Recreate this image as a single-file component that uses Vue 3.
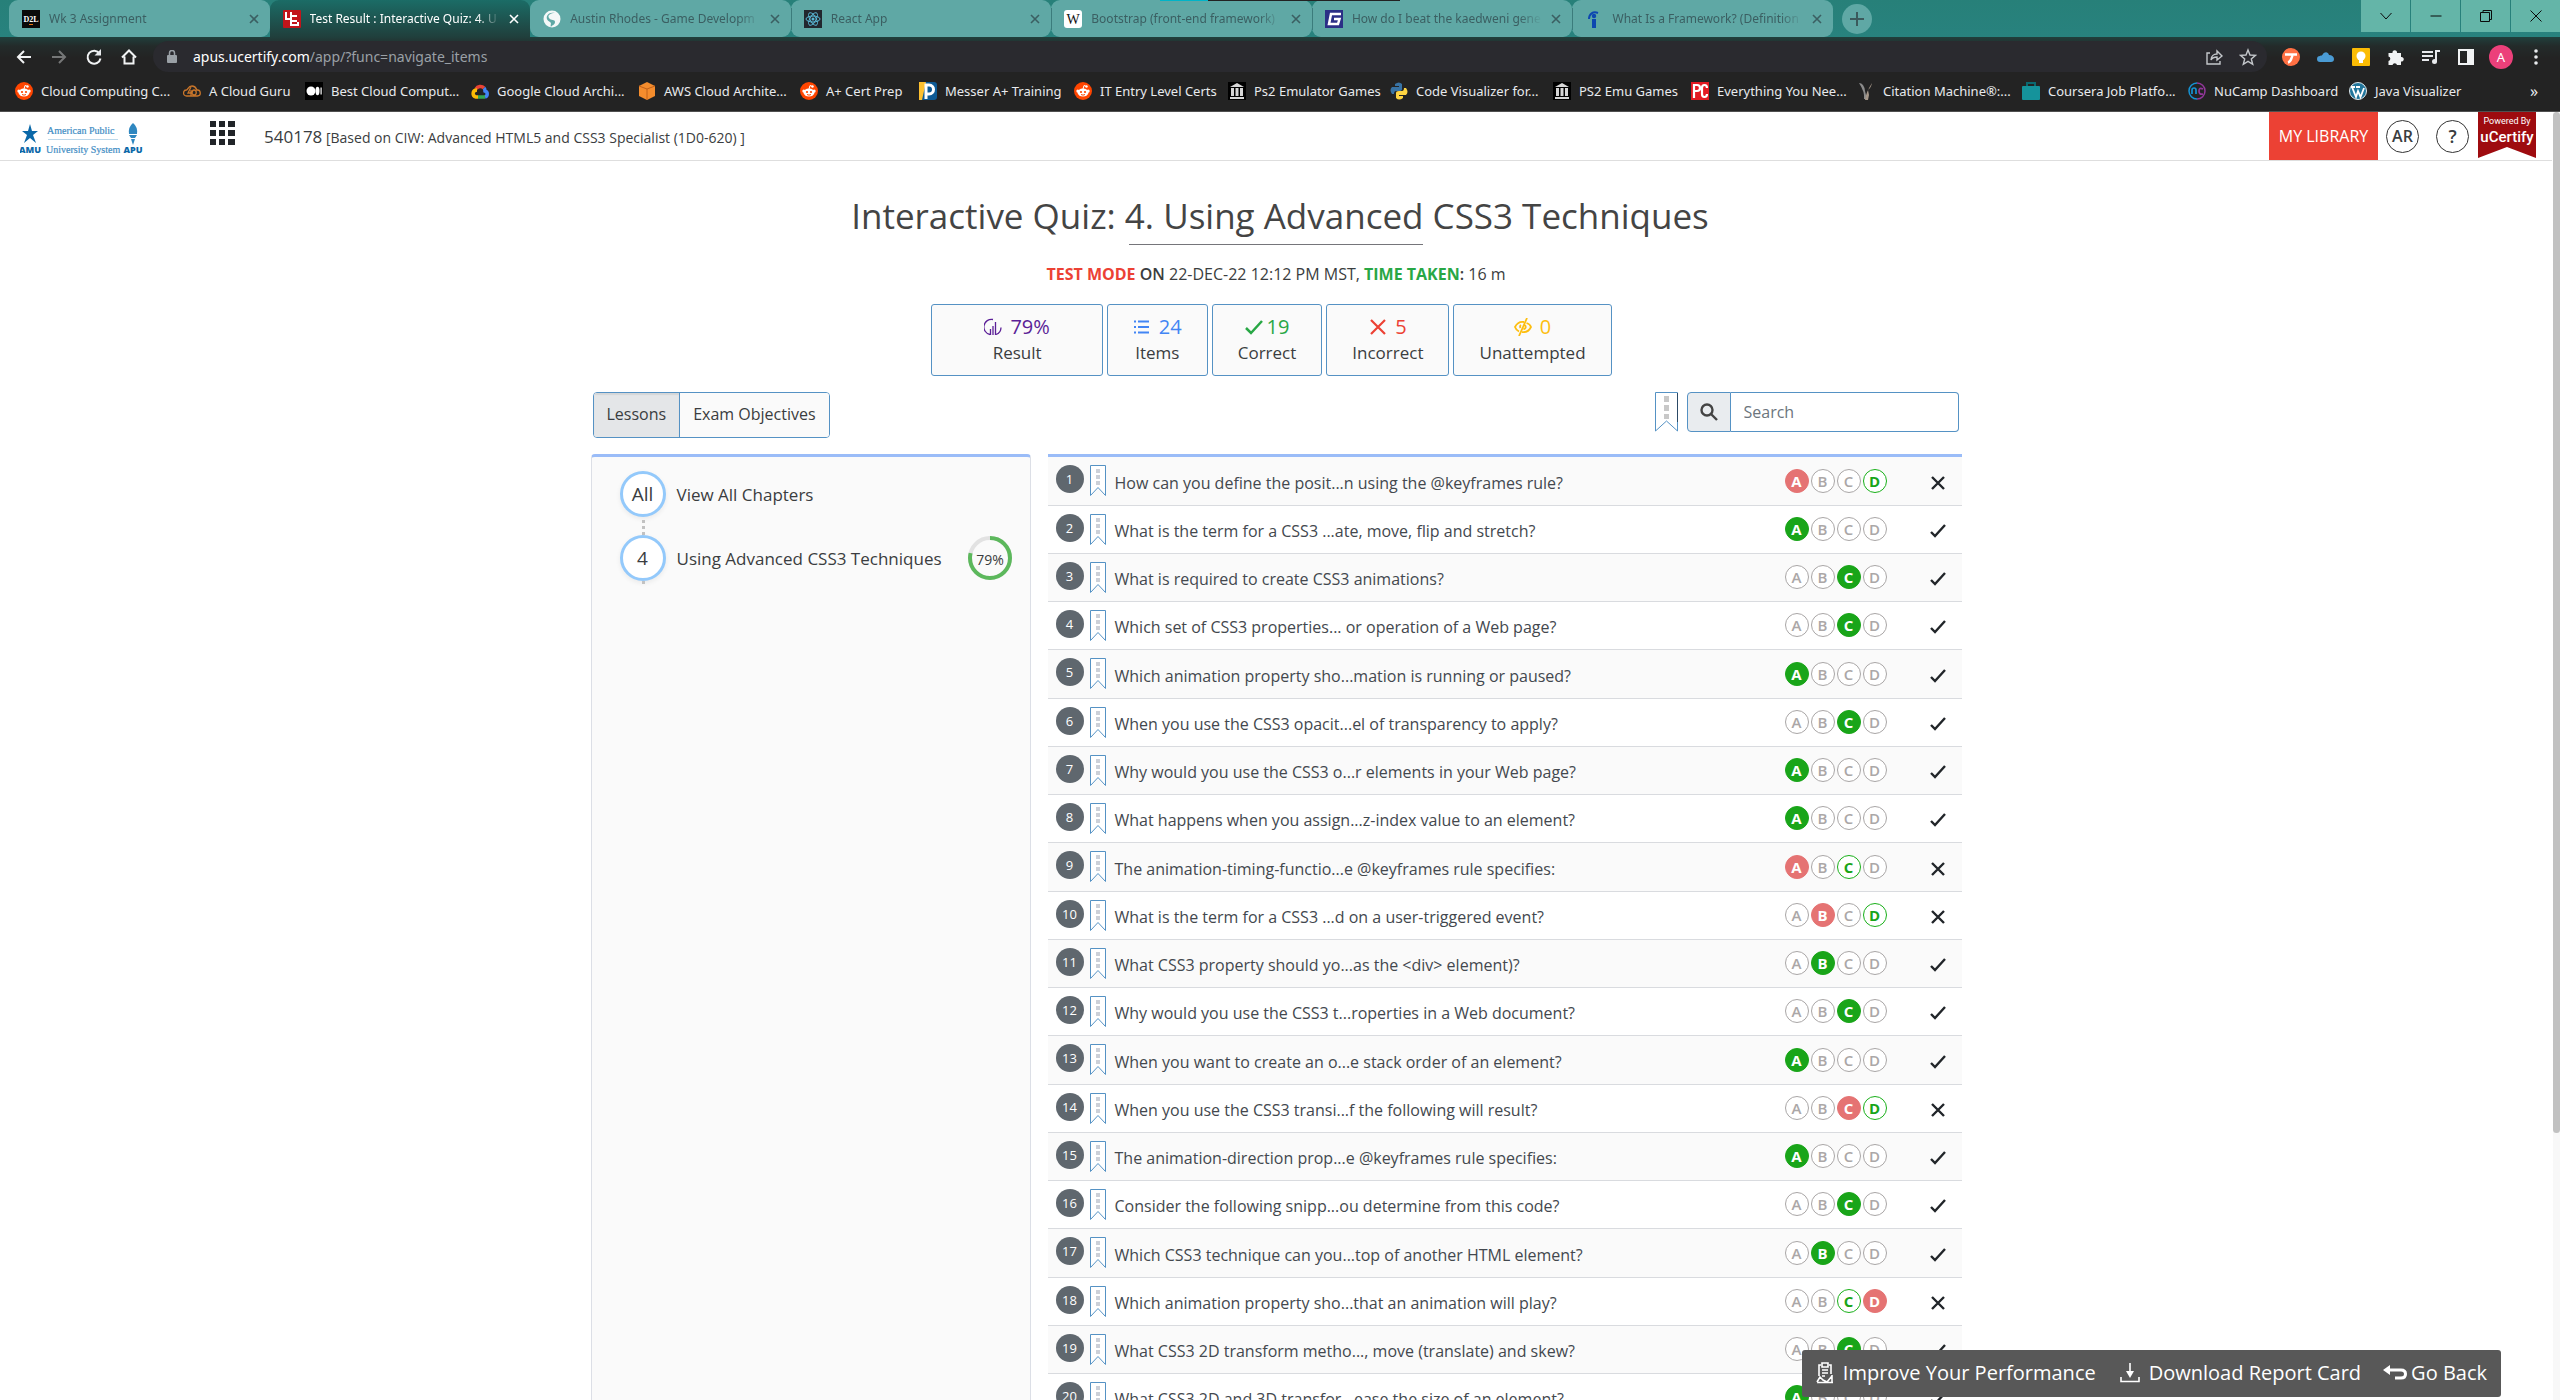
<script setup>
const tabs = [
  { title: 'Wk 3 Assignment', icon: 'd2l' },
  { title: 'Test Result : Interactive Quiz: 4. U', icon: 'uc', active: true },
  { title: 'Austin Rhodes - Game Developm', icon: 'globe' },
  { title: 'React App', icon: 'react' },
  { title: 'Bootstrap (front-end framework)', icon: 'wiki' },
  { title: 'How do I beat the kaedweni gene', icon: 'gfaq' },
  { title: 'What Is a Framework? (Definition', icon: 'indeed' },
]

const bookmarks = [
  { title: 'Cloud Computing C...', icon: 'reddit' },
  { title: 'A Cloud Guru', icon: 'guru' },
  { title: 'Best Cloud Comput...', icon: 'medium' },
  { title: 'Google Cloud Archi...', icon: 'gcloud' },
  { title: 'AWS Cloud Archite...', icon: 'aws' },
  { title: 'A+ Cert Prep', icon: 'reddit' },
  { title: 'Messer A+ Training', icon: 'messer' },
  { title: 'IT Entry Level Certs', icon: 'reddit' },
  { title: 'Ps2 Emulator Games', icon: 'archive' },
  { title: 'Code Visualizer for...', icon: 'python' },
  { title: 'PS2 Emu Games', icon: 'archive' },
  { title: 'Everything You Nee...', icon: 'pc' },
  { title: 'Citation Machine®:...', icon: 'citation' },
  { title: 'Coursera Job Platfo...', icon: 'coursera' },
  { title: 'NuCamp Dashboard', icon: 'nucamp' },
  { title: 'Java Visualizer', icon: 'wordpress' },
]

const stats = [
  { key: 'result', value: '79%', label: 'Result' },
  { key: 'items', value: '24', label: 'Items' },
  { key: 'correct', value: '19', label: 'Correct' },
  { key: 'incorrect', value: '5', label: 'Incorrect' },
  { key: 'unattempted', value: '0', label: 'Unattempted' },
]

// picked: the answer given; key: the right answer
const questions = [
  { text: 'How can you define the posit...n using the @keyframes rule?', picked: 'A', key: 'D' },
  { text: 'What is the term for a CSS3 ...ate, move, flip and stretch?', picked: 'A', key: 'A' },
  { text: 'What is required to create CSS3 animations?', picked: 'C', key: 'C' },
  { text: 'Which set of CSS3 properties... or operation of a Web page?', picked: 'C', key: 'C' },
  { text: 'Which animation property sho...mation is running or paused?', picked: 'A', key: 'A' },
  { text: 'When you use the CSS3 opacit...el of transparency to apply?', picked: 'C', key: 'C' },
  { text: 'Why would you use the CSS3 o...r elements in your Web page?', picked: 'A', key: 'A' },
  { text: 'What happens when you assign...z-index value to an element?', picked: 'A', key: 'A' },
  { text: 'The animation-timing-functio...e @keyframes rule specifies:', picked: 'A', key: 'C' },
  { text: 'What is the term for a CSS3 ...d on a user-triggered event?', picked: 'B', key: 'D' },
  { text: 'What CSS3 property should yo...as the <div> element)?', picked: 'B', key: 'B' },
  { text: 'Why would you use the CSS3 t...roperties in a Web document?', picked: 'C', key: 'C' },
  { text: 'When you want to create an o...e stack order of an element?', picked: 'A', key: 'A' },
  { text: 'When you use the CSS3 transi...f the following will result?', picked: 'C', key: 'D' },
  { text: 'The animation-direction prop...e @keyframes rule specifies:', picked: 'A', key: 'A' },
  { text: 'Consider the following snipp...ou determine from this code?', picked: 'C', key: 'C' },
  { text: 'Which CSS3 technique can you...top of another HTML element?', picked: 'B', key: 'B' },
  { text: 'Which animation property sho...that an animation will play?', picked: 'D', key: 'C' },
  { text: 'What CSS3 2D transform metho..., move (translate) and skew?', picked: 'C', key: 'C' },
  { text: 'What CSS3 2D and 3D transfor...ease the size of an element?', picked: 'A', key: 'A' },
]

function choiceClass(q, letter) {
  if (q.picked === letter) return q.key === letter ? 'right' : 'wrong'
  return q.key === letter ? 'answer' : ''
}
</script>

<template>
  <div class="window">
    <header class="chrome">
      <div class="titlebar">
        <i class="strip"></i>
        <nav class="tabs" aria-label="Tabs">
          <div v-for="t in tabs" :key="t.title" class="tab" :class="{ active: t.active }">
            <svg class="fav" viewBox="0 0 18 18" aria-hidden="true">
              <template v-if="t.icon === 'd2l'">
                <rect width="18" height="18" fill="#0a0a0a" /><text x="9" y="12" text-anchor="middle" font-size="8" font-weight="700" fill="#fff" font-family="Liberation Serif, serif">D2L</text><path d="M7 14.500h4" stroke="#e87511" stroke-width="1" />
              </template>
              <template v-else-if="t.icon === 'uc'">
                <rect width="18" height="18" rx="1" fill="#c2151b" /><path d="M3 2v7h6M8 2v14M8 6h6M14 11H9M8 15h7v-3" stroke="#fff" stroke-width="2" fill="none" />
              </template>
              <template v-else-if="t.icon === 'globe'">
                <circle cx="9" cy="9" r="8.500" fill="#f4f8f8" /><path d="M12 3C8 3 4 5 6 8s6 1 6 4-3 3-4 5c-1-2 1-4-1-5S3 9 4 6s5-4 8-3z" fill="#5fa8a5" />
              </template>
              <template v-else-if="t.icon === 'react'">
                <rect width="18" height="18" fill="#22272e" /><g fill="none" stroke="#5ab7d4"><ellipse cx="9" cy="9" rx="7" ry="3" /><ellipse cx="9" cy="9" rx="7" ry="3" transform="rotate(60 9 9)" /><ellipse cx="9" cy="9" rx="7" ry="3" transform="rotate(120 9 9)" /></g><circle cx="9" cy="9" r="1.500" fill="#5ab7d4" />
              </template>
              <template v-else-if="t.icon === 'wiki'">
                <rect width="18" height="18" rx="3" fill="#fff" /><text x="9" y="14" text-anchor="middle" font-size="14" fill="#111" font-family="Liberation Serif, serif">W</text>
              </template>
              <template v-else-if="t.icon === 'gfaq'">
                <rect width="18" height="18" fill="#2b2f86" /><path d="M16 4H6L4 14h9l1.500-5H9" stroke="#fff" stroke-width="2.500" fill="none" />
              </template>
              <template v-else>
                <path d="M4 9C4 4 8 1 13 3" stroke="#0d47b0" stroke-width="2" fill="none" /><circle cx="9" cy="6" r="2.200" fill="#0d47b0" /><rect x="7" y="9" width="4" height="9" fill="#0d47b0" />
              </template>
            </svg>
            <span class="tab-title">{{ t.title }}</span>
            <button class="tab-close" type="button" aria-label="Close tab">
              <svg width="10" height="10" viewBox="0 0 10 10"><path d="M1 1l8 8M9 1l-8 8" stroke="currentColor" stroke-width="1.600" /></svg>
            </button>
          </div>
        </nav>
        <button class="new-tab" type="button" aria-label="New tab">
          <svg width="14" height="14" viewBox="0 0 14 14"><path d="M7 0v14M0 7h14" stroke="#3b5a5c" stroke-width="2" /></svg>
        </button>
        <div class="controls">
          <button type="button" aria-label="Search tabs"><svg viewBox="0 0 12 12"><path d="M.5 3L6 9l5.500-6" /></svg></button>
          <button type="button" aria-label="Minimize"><svg viewBox="0 0 12 12"><path d="M.5 6h11" /></svg></button>
          <button type="button" aria-label="Restore"><svg viewBox="0 0 12 12"><path d="M.5 2.500h9v9h-9zM3 2.500v-2h8.500v9h-2" /></svg></button>
          <button type="button" aria-label="Close"><svg viewBox="0 0 12 12"><path d="M.5.500l11 11M11.500.500l-11 11" /></svg></button>
        </div>
      </div>

      <div class="toolbar">
        <div class="nav-buttons">
          <button type="button" aria-label="Back"><svg viewBox="0 0 18 18"><path d="M16 9H3M9 3L3 9l6 6" /></svg></button>
          <button type="button" class="dim" aria-label="Forward"><svg viewBox="0 0 18 18"><path d="M2 9h13M9 3l6 6-6 6" /></svg></button>
          <button type="button" aria-label="Reload"><svg viewBox="0 0 18 18"><path d="M14.500 5.500a6.500 6.500 0 1 0 1 5" /><path d="M16 1v6.500H9.500z" fill="#e8eaed" stroke="none" /></svg></button>
          <button type="button" aria-label="Home"><svg viewBox="0 0 18 18"><path d="M2 9.500L9 2.500l7 7M4.500 8.500v7h9v-7" /></svg></button>
        </div>
        <div class="omnibox">
          <svg class="lock" width="10" height="13" viewBox="0 0 10 13"><rect y="5" width="10" height="8" rx="1" fill="#9aa0a6" /><path d="M2.500 5V3a2.500 2.500 0 0 1 5 0v2" fill="none" stroke="#9aa0a6" stroke-width="1.500" /></svg>
          <span class="url"><b>apus.ucertify.com</b>/app/?func=navigate_items</span>
          <svg class="omni-icon" viewBox="0 0 18 18"><path d="M5 5H2v11h13v-3M6 12c0-4 3-6 6-6V3l5 5-5 4V9c-3 0-5 1-6 3z" /></svg>
          <svg class="omni-icon" viewBox="0 0 18 18"><path d="M9 2l2 5 5.500.300-4.200 3.600 1.400 5.400L9 13.300l-4.700 3 1.400-5.400L1.500 7.300 7 7z" /></svg>
        </div>
        <div class="extensions">
          <svg viewBox="0 0 18 18"><circle cx="9" cy="9" r="9" fill="#ff7043" /><path d="M3 6.500h12M11 7.500c-2 1-1 6-5 7" stroke="#fff" stroke-width="2.500" fill="none" /></svg>
          <svg viewBox="0 0 18 18"><path d="M3 14a3 3 0 0 1 0-6c1-1 2 0 3-2s5-3 6 1c3 0 5 2 5 4s-1 3-3 3z" fill="#4a9bd4" /></svg>
          <svg viewBox="0 0 18 18"><rect width="18" height="18" rx="1" fill="#fbbc04" /><circle cx="9" cy="8" r="4.500" fill="#fff" /><rect x="7" y="11" width="4" height="4" fill="#fff" /></svg>
          <svg viewBox="0 0 18 18"><path d="M1.500 5h4a2.300 2.300 0 1 1 4.500 0h4v4a2.300 2.300 0 1 1 0 4.500V17h-4a2.300 2.300 0 0 0-4.500 0h-4v-4a2.300 2.300 0 0 0 0-4.500z" fill="#f1f3f4" /></svg>
          <svg viewBox="0 0 18 18"><path d="M0 4h11M0 8h11M0 12h7M14 14V3h4" stroke="#e8eaed" stroke-width="2" fill="none" /><circle cx="12.500" cy="13.500" r="2.500" fill="#e8eaed" /></svg>
          <svg viewBox="0 0 18 18"><path d="M2 2h14v14H2z" fill="none" stroke="#f1f3f4" stroke-width="2" /><path d="M10 2h6v14h-6z" fill="#f1f3f4" /></svg>
          <button class="avatar" type="button">A</button>
          <svg viewBox="0 0 18 18"><g fill="#e8eaed"><circle cx="9" cy="3" r="1.800" /><circle cx="9" cy="9" r="1.800" /><circle cx="9" cy="15" r="1.800" /></g></svg>
        </div>
      </div>

      <nav class="bookmarks" aria-label="Bookmarks">
        <a v-for="b in bookmarks" :key="b.title" href="#" class="bookmark">
          <svg class="fav" viewBox="0 0 18 18" aria-hidden="true">
            <template v-if="b.icon === 'reddit'">
              <circle cx="9" cy="9" r="9" fill="#ff4500" /><ellipse cx="9" cy="10.500" rx="5.500" ry="4" fill="#fff" /><circle cx="3.800" cy="9" r="1.500" fill="#fff" /><circle cx="14.200" cy="9" r="1.500" fill="#fff" /><circle cx="12.500" cy="4.500" r="1.200" fill="#fff" /><path d="M9 7l1-3.500 2.500 1" stroke="#fff" fill="none" /><circle cx="7" cy="10" r="1.100" fill="#ff4500" /><circle cx="11" cy="10" r="1.100" fill="#ff4500" /><path d="M7 12.500q2 1.300 4 0" stroke="#ff4500" fill="none" />
            </template>
            <template v-else-if="b.icon === 'guru'">
              <path d="M3.500 14a3 3 0 0 1 0-6C5 8 5 4 9 4s4 3 5 4a3 3 0 0 1 .5 6zM8 5L5 11h4M8 8v6M11 8c3 0 3 5 0 5s-2-5 0-5" stroke="#c8752a" stroke-width="1.300" fill="none" />
            </template>
            <template v-else-if="b.icon === 'medium'">
              <rect width="18" height="18" fill="#000" /><circle cx="6" cy="9" r="4.500" fill="#fff" /><ellipse cx="12.500" cy="9" rx="2" ry="4.200" fill="#fff" /><rect x="15.500" y="5.500" width="1.200" height="7" fill="#fff" />
            </template>
            <template v-else-if="b.icon === 'gcloud'">
              <path d="M5 7a5 5 0 0 1 8-1" stroke="#ea4335" stroke-width="3.500" fill="none" /><path d="M13 6c1 1 1 2 1 3 3 1 3 5 0 6" stroke="#4285f4" stroke-width="3.500" fill="none" /><path d="M14 15H7" stroke="#34a853" stroke-width="3.500" /><path d="M7 15H5C1 14 1 8 6 8" stroke="#fbbc05" stroke-width="3.500" fill="none" />
            </template>
            <template v-else-if="b.icon === 'aws'">
              <path d="M9 0l8 4v10l-8 4-8-4V4z" fill="#f58d2d" /><path d="M1 4l8 3 8-3M9 7v11" stroke="#c2621a" fill="none" />
            </template>
            <template v-else-if="b.icon === 'messer'">
              <rect width="18" height="18" rx="3" fill="#0e5a94" /><path d="M0 0h7L3 18H0z" fill="#fdc02f" /><path d="M7 17V3h3c6 0 6 9 0 9H8" stroke="#fff" stroke-width="3" fill="none" />
            </template>
            <template v-else-if="b.icon === 'archive'">
              <rect width="18" height="18" fill="#000" /><path d="M2 5l7-4 7 4zM2 15h14v2H2zM3 6h3v8H3zM7.500 6h3v8h-3zM12 6h3v8h-3z" fill="#d6d6d6" />
            </template>
            <template v-else-if="b.icon === 'python'">
              <path d="M5 2q4-3 7 0v5q0 2-3 2H6q-2 0-2 3H2Q-1 8 2 5h7V4H5z" fill="#3873a5" /><path d="M13 16q-4 3-7 0v-5q0-2 3-2h3q2 0 2-3h2q3 4 0 7H9v1h4z" fill="#ffd542" />
            </template>
            <template v-else-if="b.icon === 'pc'">
              <rect width="18" height="18" fill="#e31b23" /><path d="M3 16V3h3q3 0 3 3t-3 3H4M16 6q0-3-2.500-3T11 6v6q0 3 2.500 3t2.500-3" stroke="#fff" stroke-width="2.200" fill="none" />
            </template>
            <template v-else-if="b.icon === 'citation'">
              <path d="M2 1q5 0 6 8l2 8H7Q8 10 2 1z" fill="#8b8b8b" /><path d="M15 1q-1 5-4 7l1 5-1 5H8q1-8 7-17z" fill="#a59789" />
            </template>
            <template v-else-if="b.icon === 'coursera'">
              <rect y="4" width="18" height="14" rx="1" fill="#15939b" /><path d="M5 4V1h8v3" stroke="#0b6970" stroke-width="2" fill="none" />
            </template>
            <template v-else-if="b.icon === 'nucamp'">
              <path d="M9 1a8 8 0 0 0 0 16" stroke="#1592d2" stroke-width="1.500" fill="none" /><path d="M9 1a8 8 0 0 1 0 16" stroke="#93379b" stroke-width="1.500" fill="none" /><path d="M4 12V8q0-2 2-2t2 2v4" stroke="#1592d2" stroke-width="1.700" fill="none" /><path d="M15 7q-4-2-4 2t4 3" stroke="#93379b" stroke-width="1.700" fill="none" />
            </template>
            <template v-else>
              <circle cx="9" cy="9" r="8.500" fill="#21759b" stroke="#dfe9ee" /><path d="M3 5l4 10 2-6 2.500 6L15 6M2 5h4M7 5h4" stroke="#fff" stroke-width="1.800" fill="none" />
            </template>
          </svg>
          <span>{{ b.title }}</span>
        </a>
        <button class="more" type="button">»</button>
      </nav>
    </header>

    <div class="page">
      <header class="site-head">
        <svg class="logo" width="124" height="38" viewBox="0 0 124 38" role="img" aria-label="American Public University System">
          <path d="M10 2l2 7h6l-5 4 3 8-6-5-6 5 3-8-5-4h6z" fill="#0b68a8" />
          <path d="M113 1q5 4 4 11h-8q-1-7 4-11zM109 13h8l-2 3h-4zM111 17h4l-2 6z" fill="#2f87c0" />
          <g font-family="Liberation Serif, serif" font-size="10" fill="#3f8dc4" stroke="#3f8dc4" stroke-width=".2"><text x="27" y="12">American Public</text><text x="26" y="31">University System</text></g>
          <g font-family="Open Sans, sans-serif" font-size="9" font-weight="800" fill="#0b68a8"><text x="10" y="31" text-anchor="middle">AMU</text><text x="113" y="31" text-anchor="middle">APU</text></g>
          <path d="M28 17.500h70" stroke="#bcd8ea" />
        </svg>
        <svg class="apps" width="25" height="25" viewBox="0 0 25 25"><path d="M0 0h6v6H0zM9 0h6v6H9zM18 0h7v6h-7zM0 9h6v6H0zM9 9h6v6H9zM18 9h7v6h-7zM0 18h6v6H0zM9 18h6v6H9zM18 18h7v6h-7z" fill="#212529" /></svg>
        <p class="course"><span>540178</span> [Based on CIW: Advanced HTML5 and CSS3 Specialist (1D0-620) ]</p>
        <a href="#" class="library">MY LIBRARY</a>
        <button class="round user" type="button">AR</button>
        <button class="round help" type="button">?</button>
        <div class="ribbon"><small>Powered By</small><strong>uCertify</strong></div>
      </header>

      <main class="content">
        <h1>Interactive Quiz: 4. Using Advanced CSS3 Techniques</h1>
        <hr class="rule" />
        <p class="mode"><b class="red">TEST MODE</b> <b>ON</b> 22-DEC-22 12:12 PM MST, <b class="green">TIME TAKEN</b><b>:</b> 16 m</p>

        <div class="stats">
          <button v-for="s in stats" :key="s.key" type="button" class="stat" :class="s.key">
            <span class="figure">
              <svg width="18" height="18" viewBox="0 0 18 18" aria-hidden="true">
                <path v-if="s.key === 'result'" d="M9 1.500A7.500 7.500 0 0 0 6 16.500M12 16.500a7.500 7.500 0 0 0 5-7M6.500 11v6M9 8v9M11.500 4v13" stroke-width="1.300" />
                <path v-else-if="s.key === 'items'" d="M5 3.500h11M5 9h11M5 14.500h11M1 3.500h2M1 9h2M1 14.500h2" stroke-width="2" />
                <path v-else-if="s.key === 'correct'" d="M1 10l5 5L17 3" stroke-width="2.500" />
                <path v-else-if="s.key === 'incorrect'" d="M2 2l14 14M16 2L2 16" stroke-width="2.200" />
                <path v-else d="M10 4Q4 3 1 9q1 3 4 4.500M12.500 5Q16 6 17 9q-3 6-9 5M13 0L5 18M11 7q2 3-1.500 4.500M7 7q-1.500 1-.500 3" stroke-width="1.800" />
              </svg>
              {{ s.value }}
            </span>
            <span>{{ s.label }}</span>
          </button>
        </div>

        <div class="filters">
          <div class="toggle">
            <button type="button" class="on">Lessons</button>
            <button type="button">Exam Objectives</button>
          </div>
          <form class="search" @submit.prevent>
            <button type="button" class="flag big" aria-label="Bookmarked">
              <svg width="23" height="40" viewBox="0 0 23 40"><path d="M.5.500h22V39L11.500 29 .5 39z" fill="#fff" stroke="#5592c4" /><path d="M22.500 1v29" stroke="#2c4a66" /><path d="M9 4h5v6H9zM9 13h5v6H9zM9 22h5v5H9z" fill="#c8c8c8" /></svg>
            </button>
            <label for="search"><svg width="18" height="18" viewBox="0 0 18 18"><circle cx="7" cy="7" r="5.500" /><path d="M11 11l6 6" /></svg></label>
            <input id="search" type="text" placeholder="Search" />
          </form>
        </div>

        <div class="columns">
          <aside class="chapters">
            <a href="#" class="chapter"><span class="bubble">All</span><span class="name">View All Chapters</span></a>
            <a href="#" class="chapter">
              <span class="bubble">4</span><span class="name">Using Advanced CSS3 Techniques</span>
              <svg class="ring" width="44" height="44" viewBox="0 0 44 44">
                <circle cx="22" cy="22" r="20" fill="none" stroke="#e2e2e2" stroke-width="4" />
                <circle cx="22" cy="22" r="20" fill="none" stroke="#5cb85c" stroke-width="4" pathLength="100" stroke-dasharray="79 21" transform="rotate(-90 22 22)" />
                <text x="22" y="29" text-anchor="middle">79%</text>
              </svg>
            </a>
          </aside>

          <table class="questions">
            <tbody>
              <tr v-for="(q, i) in questions" :key="i">
                <td class="num"><div><span>{{ i + 1 }}</span>
                  <button type="button" class="flag" aria-label="Bookmark question">
                    <svg width="16" height="32" viewBox="0 0 16 32"><path d="M.5.500h15v30L8 22.500.5 30.500z" fill="#fff" stroke="#5592c4" /><path d="M6 4h4v4H6zM6 10h4v4H6zM6 16h4v4H6z" fill="#ccd0d8" /></svg>
                  </button></div>
                </td>
                <td class="text"><a href="#">{{ q.text }}</a></td>
                <td class="choices"><div><span v-for="c in 'ABCD'" :key="c" :class="choiceClass(q, c)">{{ c }}</span></div></td>
                <td class="mark">
                  <svg width="18" height="16" viewBox="0 0 18 16"><path v-if="q.picked === q.key" d="M2 9l4 4L16 2" /><path v-else d="M3 2l12 12M15 2L3 14" /></svg>
                </td>
              </tr>
            </tbody>
          </table>
        </div>
      </main>

      <footer class="actions">
        <button type="button">
          <svg width="18" height="22" viewBox="0 0 18 22" class="fine"><path d="M5 3H3v11M13 3h2v9M6 1h6v4H6zM6 8h6M6 11h6M6 14h3M1 20.500h16M1 20l3-5 3 3 4 2 5-6M16 13v7" /></svg>
          <span>Improve Your Performance</span>
        </button>
        <button type="button">
          <svg width="20" height="20" viewBox="0 0 20 20" class="fine"><path d="M1 14v4.500h18V14M10 0v12" /><path d="M6 8h8l-4 7z" fill="#fff" stroke="none" /></svg>
          <span>Download Report Card</span>
        </button>
        <button type="button" class="back">
          <svg width="24" height="16" viewBox="0 0 24 16"><path d="M3 5h15q4.500 0 4.500 4T18 13h-6" /><path d="M7 0v10L0 5z" fill="#fff" stroke="none" /></svg>
          <span>Go Back</span>
        </button>
      </footer>
      <div class="scrollbar"><i></i></div>
    </div>
  </div>
</template>

<style>
body { margin: 0; }
</style>

<style scoped>
* { box-sizing: border-box; }
button { border: 0; padding: 0; background: none; font: inherit; color: inherit; }
a { color: inherit; text-decoration: none; }
svg { flex: none; display: block; }
.window { height: 100vh; overflow: hidden; display: flex; flex-direction: column; background: #fff; font-family: "Open Sans", sans-serif; color: #3a3d40; }

.chrome { flex: none; height: 112px; border-bottom: 1px solid #505050; background: linear-gradient(#203f3c 37px, #232b2a 46px, #232323 58px); font-size: 14px; font-family: "Noto Sans", "Open Sans", sans-serif; color: #e8eaed; }
.titlebar { position: relative; height: 37px; display: flex; align-items: flex-start; padding-left: 9px; background: linear-gradient(#278079, #28827e); }
.strip { position: absolute; z-index: 1; top: 0; left: 1160px; width: 240px; height: 1px; background: linear-gradient(90deg, #00b4c8 20%, #222 20%); }
.tabs { display: flex; width: 1824px; height: 37px; }
.tab { flex: 1 1 0; min-width: 0; display: flex; align-items: center; gap: 9px; padding: 0 11px 0 13px; border-radius: 9px; background: #5fa8a5; color: #3b5f62; position: relative; font-size: 12px; }
.tab.active { background: linear-gradient(#1b6c66, #203f3c); color: #fff; border-radius: 9px 9px 0 0; }
.tab + .tab:not(.active)::before { content: ""; position: absolute; left: 0; top: 8px; height: 22px; width: 1px; background: #3b7c7c; }
.tab:nth-child(3)::before { display: none; }
.fav { width: 18px; height: 18px; }
.tab-title { flex: 1; overflow: hidden; white-space: nowrap; mask-image: linear-gradient(90deg, #000 88%, transparent); }
.new-tab { width: 30px; height: 30px; margin: 4px 0 0 9px; border-radius: 50%; background: #5fa8a5; display: grid; place-items: center; }
.controls { margin-left: auto; display: flex; gap: 1px; }
.controls button { width: 49px; height: 32px; background: #64b5a8; display: grid; place-items: center; }
.controls svg { width: 12px; height: 12px; fill: none; stroke: #0b0b0b; }

.toolbar { display: flex; align-items: center; padding: 4px 15px 0 15px; height: 35px; }
.nav-buttons { display: flex; gap: 17px; width: 138px; }
.nav-buttons svg { width: 18px; height: 18px; fill: none; stroke: #f1f3f4; stroke-width: 2; }
.nav-buttons .dim { opacity: .4; }
.omnibox { flex: 1; height: 31px; display: flex; align-items: center; gap: 16px; padding: 0 10px 0 14px; border-radius: 16px; background: #2a2a2f; color: #9aa0a6; }
.url { flex: 1; }
.url b { font-weight: 400; color: #fff; }
.omni-icon { width: 18px; height: 18px; fill: none; stroke: #c4c7cb; stroke-width: 1.400; }
.extensions { display: flex; align-items: center; gap: 17px; margin-left: 15px; }
.extensions svg { width: 18px; height: 18px; }
.avatar { width: 24px; height: 24px; margin: 0 -3px; border-radius: 50%; background: #ec407a; color: #fff; font-size: 13px; }

.bookmarks { display: grid; grid-template-columns: 168px 122px 166px 167px 162px 119px 155px 154px 162px 163px 138px 166px 165px 166px 161px 1fr 30px; align-items: center; height: 38px; padding-left: 15px; font-size: 13px; }
.bookmark { display: flex; align-items: center; gap: 8px; white-space: nowrap; }
.more { font-size: 16px; text-align: left; }

.page { position: relative; flex: 1; min-height: 0; overflow: hidden; padding-right: 8px; }
.site-head { display: flex; align-items: center; height: 49px; border-bottom: 1px solid #dedede; padding: 0 16px 0 20px; }
.logo { margin-top: 9px; }
.logo + .apps { margin: -6px 29px 0 66px; }
.course { margin: 0 auto 0 0; font-size: 14px; }
.course span { font-size: 17px; }
.library { align-self: stretch; display: flex; align-items: center; justify-content: center; width: 109px; background: #ec4134; color: #fff; font-size: 16px; }
.round { width: 33px; height: 33px; border: 1px solid #333; border-radius: 50%; font-size: 16px; font-weight: 600; }
.user { margin: 0 17px 0 8px; }
.help { margin-right: 9px; font-size: 18px; }
.ribbon { align-self: flex-start; width: 58px; height: 46px; display: flex; flex-direction: column; align-items: center; padding-top: 3px; background: #9e0b0f; clip-path: polygon(0 0, 100% 0, 100% 100%, 50% 76%, 0 100%); color: #fff; font-family: Roboto, sans-serif; }
.ribbon small { font-size: 9px; line-height: 12px; }
.ribbon strong { font-size: 15px; line-height: 20px; font-weight: 500; }

.content { width: 1371px; max-width: 100%; margin: 0 auto; }
h1 { margin: 31px 0 0; padding-left: 8px; text-align: center; font-size: 35px; line-height: 48px; font-weight: 400; color: #444; }
.rule { width: 294px; height: 1px; margin: 4px auto 0; border: 0; background: #75757a; }
.mode { margin: 17px 0 0; text-align: center; font-size: 16px; line-height: 24px; }
.mode b { font-weight: 600; }
.mode .red, .mode .green { font-weight: 700; }
.red { color: #ec4134; }
.green { color: #28a745; }

.stats { display: flex; justify-content: center; gap: 4px; margin-top: 18px; padding-right: 9px; }
.stat { height: 72px; padding: 0 25px; border: 1px solid #5592c4; border-radius: 3px; background: #fafafa; font-size: 17px; line-height: 26px; display: flex; flex-direction: column; align-items: center; justify-content: center; }
.stat.result { padding: 0 52px; }
.figure { display: flex; align-items: center; gap: 8px; font-size: 20px; }
.figure svg { fill: none; stroke: currentColor; }
.result .figure { color: #5b1f97; }
.items .figure { color: #4285f4; }
.correct .figure { color: #28a745; gap: 4px; }
.incorrect .figure { color: #ec4134; }
.unattempted .figure { color: #fdbe10; }

.filters { display: flex; justify-content: space-between; margin: 16px 3px 0 2px; height: 46px; }
.toggle { display: flex; border: 1px solid #5592c4; border-radius: 4px; overflow: hidden; font-size: 16px; }
.toggle button { padding: 0 13px 2px; background: #fafafa; }
.toggle .on { background: #e4e6e8; border-right: 1px solid #5592c4; box-shadow: inset 0 2px 1px #d4d6d8; }
.search { display: flex; height: 40px; }
.big { margin-right: 9px; }
.search label { width: 44px; display: grid; place-items: center; border: 1px solid #5592c4; border-radius: 4px 0 0 4px; background: #e9ecef; }
.search label svg { fill: none; stroke: #444; stroke-width: 2.400; }
.search input { width: 228px; border: 1px solid #5592c4; border-left: 0; border-radius: 0 4px 4px 0; padding: 0 13px; font: 16px "Open Sans", sans-serif; color: #495057; background: #fff; }
.search input::placeholder { color: #6c757d; opacity: 1; }

.columns { display: grid; grid-template-columns: 440px 1fr; gap: 17px; margin-top: 16px; }
.chapters { border: 1px solid #dcdfe6; border-top: 3px solid #9abcf8; border-radius: 4px; background: #fafafa; padding: 14px 18px 0 28px; }
.chapter { display: flex; align-items: center; position: relative; height: 46px; margin-bottom: 18px; font-size: 17px; }
.chapter::after { content: ""; position: absolute; left: 22px; top: 49px; width: 3px; height: 15px; background: repeating-linear-gradient(#c2c2c2 0 3px, transparent 3px 6px); }
.chapter:last-child::after { top: 46px; height: 3px; }
.bubble { width: 46px; height: 46px; border: 3px solid #93c9fb; border-radius: 50%; background: #fff; display: grid; place-items: center; font-size: 19px; margin-right: 11px; box-shadow: 0 2px 5px #0001; }
.ring { margin-left: auto; }
.ring text { font-size: 14px; fill: #3a3d40; }

.questions { width: 100%; border-collapse: separate; border-spacing: 0; border-top: 3px solid #9abcf8; }
tr { height: 48px; }
tr:nth-child(4n + 1) { height: 49px; }
tr:nth-child(odd) { background: #fafafa; }
td { padding: 0; border-bottom: 1px solid #d9dbdf; }
.num { width: 67px; padding-left: 8px; }
.num div { display: flex; align-items: flex-start; gap: 6px; }
.num span { width: 28px; height: 28px; border-radius: 50%; background: #5f676e; color: #fff; font-size: 13px; display: grid; place-items: center; }
.text { font-size: 16px; color: #43484e; padding-top: 3px; }
.choices { width: 130px; }
.choices div { display: flex; gap: 2px; padding-bottom: 1px; }
.choices span { width: 24px; height: 24px; border: 1px solid #a9a6a6; border-radius: 50%; display: grid; place-items: center; background: #fff; color: #aba7a7; font-size: 15px; line-height: 20px; font-weight: 600; }
.choices .right { background: #19a519; border-color: #19a519; color: #fff; }
.choices .wrong { background: #e57373; border-color: #e57373; color: #fff; }
.choices .answer { border-color: #19b019; color: #19a519; }
.choices .right, .choices .wrong, .choices .answer { font-weight: 700; }
.mark { width: 47px; padding: 3px 0 0 14px; }
.mark svg { fill: none; stroke: #212529; stroke-width: 2.400; }

.actions { position: absolute; right: 59px; bottom: 3px; height: 47px; display: flex; align-items: center; gap: 24px; padding: 0 14px 2px; border-radius: 3px; background: #585858; color: #fff; font-size: 20px; }
.actions button { display: flex; align-items: center; gap: 9px; }
.actions .back { gap: 4px; margin-left: -2px; }
.actions svg { fill: none; stroke: #fff; stroke-width: 3; }
.actions svg.fine { stroke-width: 1.600; }
.scrollbar { position: absolute; top: 0; right: 0; bottom: 0; width: 7px; background: #f8f8f8; }
.scrollbar i { display: block; height: 1021px; border-radius: 4px; background: #c1c1c1; }
</style>
